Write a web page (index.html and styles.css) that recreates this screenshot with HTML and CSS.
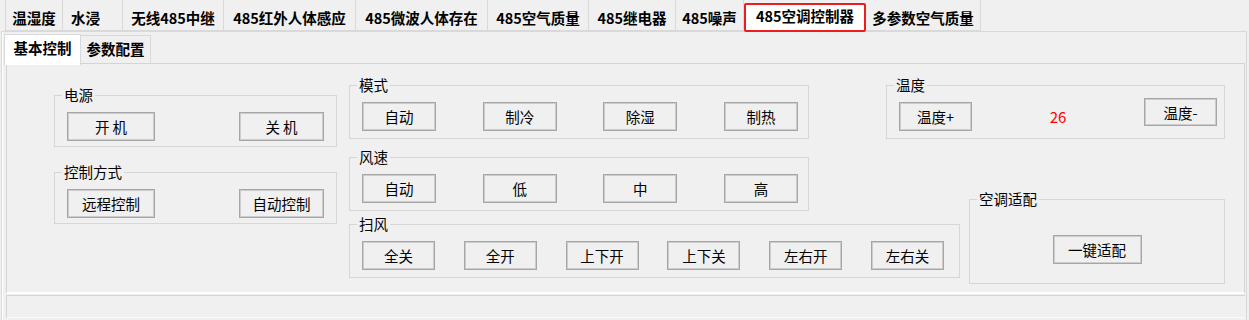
FILE: index.html
```html
<!DOCTYPE html>
<html lang="zh-CN">

<head>
	<meta charset="utf-8">
	<title>485空调控制器</title>
	<link rel="stylesheet" href="styles.css">
</head>

<body>

	<div class="window">

		<!-- device tabs -->
		<div class="top-tabs">
			<div class="top-tab">温湿度</div>
			<div class="top-tab tab-left">水浸</div>
			<div class="top-tab">无线485中继</div>
			<div class="top-tab">485红外人体感应</div>
			<div class="top-tab">485微波人体存在</div>
			<div class="top-tab">485空气质量</div>
			<div class="top-tab">485继电器</div>
			<div class="top-tab">485噪声</div>
			<div class="top-tab active">485空调控制器</div>
			<div class="top-tab">多参数空气质量</div>
		</div>

		<div class="top-page">

			<div class="sub-tabs">
				<div class="sub-tab active">基本控制</div>
				<div class="sub-tab">参数配置</div>
			</div>

			<div class="sub-page">

				<div class="col col-left">
					<fieldset class="group">
						<legend>电源</legend>
						<div class="group-body split">
							<button class="btn btn-wide">开 机</button>
							<button class="btn btn-med">关 机</button>
						</div>
					</fieldset>

					<fieldset class="group group-mode">
						<legend>控制方式</legend>
						<div class="group-body split">
							<button class="btn btn-wide">远程控制</button>
							<button class="btn btn-med">自动控制</button>
						</div>
					</fieldset>
				</div>

				<div class="col col-mid">
					<fieldset class="group group-four">
						<legend>模式</legend>
						<div class="group-body row-four">
							<button class="btn btn-std">自动</button>
							<button class="btn btn-std">制冷</button>
							<button class="btn btn-std">除湿</button>
							<button class="btn btn-std">制热</button>
						</div>
					</fieldset>

					<fieldset class="group group-four group-speed">
						<legend>风速</legend>
						<div class="group-body row-four">
							<button class="btn btn-std">自动</button>
							<button class="btn btn-std">低</button>
							<button class="btn btn-std">中</button>
							<button class="btn btn-std">高</button>
						</div>
					</fieldset>

					<fieldset class="group group-swing">
						<legend>扫风</legend>
						<div class="group-body row-six">
							<button class="btn btn-small">全关</button>
							<button class="btn btn-small">全开</button>
							<button class="btn btn-small">上下开</button>
							<button class="btn btn-small">上下关</button>
							<button class="btn btn-small">左右开</button>
							<button class="btn btn-small">左右关</button>
						</div>
					</fieldset>
				</div>

				<div class="col col-right">
					<fieldset class="group">
						<legend>温度</legend>
						<div class="group-body row-temp">
							<button class="btn btn-small">温度+</button>
							<span class="temp-value">26</span>
							<button class="btn btn-small btn-raised">温度-</button>
						</div>
					</fieldset>

					<fieldset class="group group-match">
						<legend>空调适配</legend>
						<div class="group-body row-center">
							<button class="btn btn-match">一键适配</button>
						</div>
					</fieldset>
				</div>

			</div>

			<div class="status-bar"></div>

		</div>
	</div>

</body>

</html>
```

FILE: styles.css
```css
body {
	margin: 0;
	padding: 0;
	background-color: #f0f0f0;
	font-family: "Noto Sans CJK SC", "Microsoft YaHei", sans-serif;
	font-size: 14.5px;
	color: #000;
}

.window {
	width: 1249px;
	height: 320px;
	overflow: hidden;
}

/* *** device tab strip *** */
.top-tabs {
	display: flex;
	height: 31px;
	padding-left: 5px;
}

.top-tab {
	box-sizing: border-box;
	height: 31px;
	padding-top: 4px;
	display: flex;
	align-items: center;
	justify-content: center;
	font-weight: bold;
	white-space: nowrap;
	border-right: 1px solid #d9d9d9;
	border-bottom: 1px solid #d9d9d9;
	background-color: #f0f0f0;
}

.top-tab:first-child {
	border-left: 1px solid #d9d9d9;
}

.top-tab:nth-child(1) { width: 58px; }
.top-tab:nth-child(2) { width: 60px; }
.top-tab:nth-child(3) { width: 101px; }
.top-tab:nth-child(4) { width: 132px; }
.top-tab:nth-child(5) { width: 132px; }
.top-tab:nth-child(6) { width: 101px; }
.top-tab:nth-child(7) { width: 87px; }
.top-tab:nth-child(8) { width: 68px; }
.top-tab:nth-child(9) { width: 122px; }
.top-tab:nth-child(10) { width: 115px; }

.tab-left {
	justify-content: flex-start;
	padding-left: 8px;
}

.top-tab.active {
	margin-top: 3px;
	height: 29px;
	padding-top: 0;
	padding-bottom: 4px;
	background-color: #fff;
	border: 2px solid #ee1d1d;
	border-radius: 2px;
}

/* *** outer tab page *** */
.top-page {
	box-sizing: border-box;
	width: 1246px;
	height: 289px;
	margin-left: 1px;
	border-top: 1px solid #d9d9d9;
	border-left: 1px solid #d9d9d9;
	border-right: 1px solid #d9d9d9;
	box-shadow: inset 1px 0 0 #fff;
}

.sub-tabs {
	display: flex;
	align-items: flex-end;
	height: 32px;
	padding-left: 2px;
}

.sub-tab {
	box-sizing: border-box;
	width: 70px;
	height: 28px;
	padding-bottom: 2px;
	display: flex;
	align-items: center;
	justify-content: center;
	font-weight: bold;
	border-top: 1px solid #d9d9d9;
	border-right: 1px solid #d9d9d9;
	margin-bottom: 1px;
}

.sub-tab.active {
	position: relative;
	z-index: 1;
	width: 77px;
	height: 31px;
	padding-bottom: 6px;
	margin-bottom: -1px;
	background-color: #fff;
	border-left: 1px solid #d9d9d9;
}

.sub-page {
	box-sizing: border-box;
	display: flex;
	align-items: flex-start;
	height: 231px;
	margin: -1px 1px 0 4px;
	border: 1px solid #d4d4d4;
	border-bottom: 2px solid #fff;
}

.status-bar {
	box-sizing: border-box;
	height: 23px;
	margin: 1px 1px 0 4px;
	border-top: 1px solid #d4d4d4;
	border-left: 1px solid #d4d4d4;
	border-bottom: 1px solid #fafafa;
}

/* *** columns of group boxes *** */
.col {
	display: flex;
	flex-direction: column;
	align-items: flex-start;
}

.col-left {
	width: 283px;
	margin-left: 47px;
	margin-top: 22px;
}

.col-mid {
	width: 460px;
	margin-left: 12px;
	margin-top: 12px;
}

.col-right {
	width: 339px;
	margin-left: 77px;
	margin-top: 12px;
}

.group {
	box-sizing: border-box;
	width: 100%;
	margin: 0;
	padding: 0;
	min-width: 0;
	border: 1px solid #d6d6d6;
}

.group legend {
	margin-left: 7px;
	padding: 0 2px;
	line-height: 18px;
}

.group-body {
	display: flex;
	align-items: flex-start;
	padding: 8px 12px 5px 12px;
}

.group-mode {
	margin-top: 16px;
}

.group-four .group-body,
.group-swing .group-body {
	padding-bottom: 7px;
}

.group-speed {
	margin-top: 9px;
}

.group-swing {
	width: 611px;
	margin-top: 4px;
}

.group-match {
	width: 256px;
	margin-left: 83px;
	margin-top: 51px;
}

.split {
	justify-content: space-between;
}

.row-four {
	justify-content: space-between;
	padding-right: 10px;
}

.row-six {
	justify-content: space-between;
	padding-right: 15px;
}

.row-temp {
	justify-content: space-between;
	align-items: center;
	padding-right: 7px;
	padding-bottom: 7px;
}

.row-center {
	justify-content: center;
	padding-top: 27px;
	padding-bottom: 19px;
}

/* *** buttons *** */
.btn {
	box-sizing: border-box;
	height: 29px;
	padding: 0;
	display: flex;
	align-items: center;
	justify-content: center;
	font-family: inherit;
	font-size: 14.5px;
	color: #000;
	background-color: #f0f0f0;
	border: 1px solid #a6a6a6;
	box-shadow: inset 0 0 0 1px #cdcdcd;
	white-space: pre;
}

.btn-wide { width: 88px; }
.btn-med { width: 85px; }
.btn-std { width: 74px; }
.btn-small { width: 73px; }
.btn-match { width: 89px; }

.btn-raised {
	height: 28px;
	align-self: flex-start;
	margin-top: -4px;
}

.temp-value {
	color: #f00;
	font-size: 15px;
}
```
